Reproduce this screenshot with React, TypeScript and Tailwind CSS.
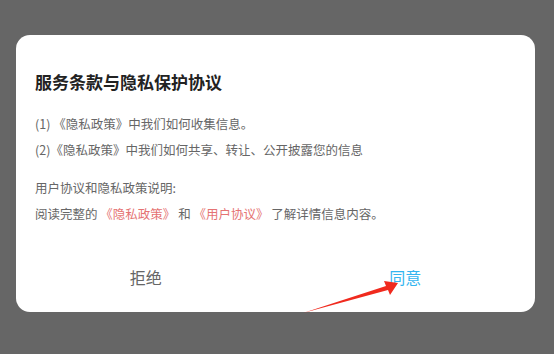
const font = { fontFamily: '"Noto Sans CJK SC", "Noto Sans", sans-serif' };

export default function App() {
  return (
    <div className="relative h-[354px] w-[554px] bg-[#666666] pt-[35px]" style={font}>
      <div className="mx-[16px] h-[277px] w-[519px] rounded-[14px] bg-white pl-[19px] pt-[35px]">
        <h1 className="text-[17px] font-bold leading-[24px] text-[#222222]">服务条款与隐私保护协议</h1>
        <div className="mt-[17px] text-[12.5px] leading-[26px] text-[#666666]">
          <p>(1) 《隐私政策》中我们如何收集信息。</p>
          <p>(2)《隐私政策》中我们如何共享、转让、公开披露您的信息</p>
          <p className="mt-[12px]">用户协议和隐私政策说明:</p>
          <p>
            阅读完整的 <span className="text-[#e57373]">《隐私政策》</span> 和{" "}
            <span className="text-[#e57373]">《用户协议》</span> 了解详情信息内容。
          </p>
        </div>
        <div className="-ml-[19px] mt-[38px] flex text-[16px] leading-[24px]">
          <button className="flex-1 text-center text-[#666666]">拒绝</button>
          <button className="flex-1 text-center text-[#33b5f0]">同意</button>
        </div>
      </div>
      <svg className="absolute left-0 top-0" width="554" height="354">
        <polygon points="303,313 386,286 384,281 398,283 390,295 388,290" fill="#f02a1e" />
      </svg>
    </div>
  );
}
